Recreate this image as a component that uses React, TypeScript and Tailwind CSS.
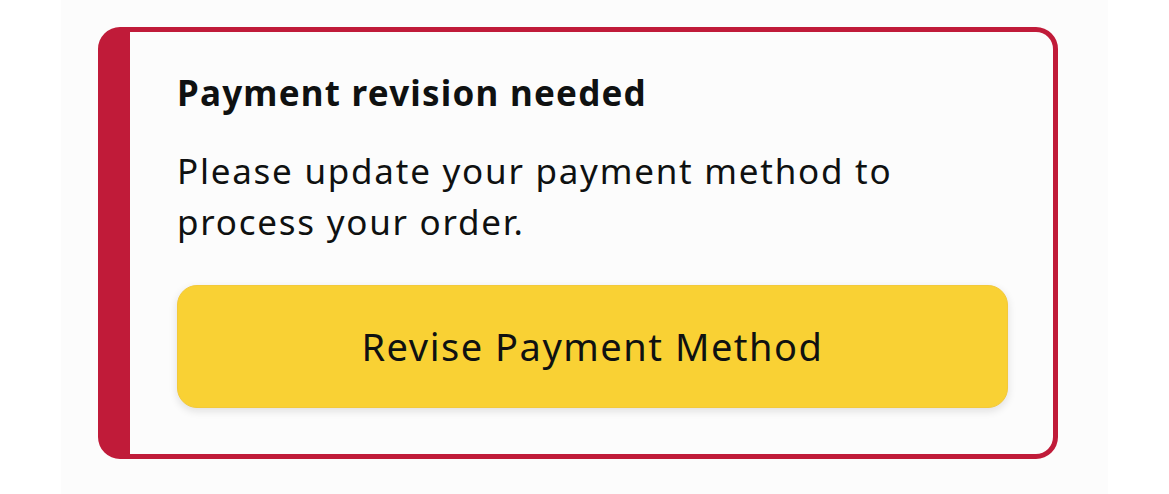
const App = () => {
  return (
    <div className="flex w-[1169px] h-[494px] bg-white font-['Noto_Sans',sans-serif] text-[#0f1111]">
      <div className="w-[61px] shrink-0 bg-white" />
      <div className="w-[1047px] shrink-0 bg-[#fcfcfc] pl-[37px] pt-[27px]">
        <div className="w-[960px] h-[432px] rounded-[22px] border-[5px] border-l-[32px] border-[#c01b39] bg-[#fcfcfc] pl-[47px] pr-[45px] pt-[39px]">
          <h2 className="text-[35px] leading-[44px] font-bold tracking-[0.035em]">
            Payment revision needed
          </h2>
          <p className="mt-[30px] text-[35px] leading-[51px] tracking-[0.05em]">
            Please update your payment method to
            <br />
            process your order.
          </p>
          <button className="mt-[38px] flex h-[123px] w-full items-center justify-center rounded-[20px] border border-[#f3c93a] bg-[#f9d134] text-[38px] tracking-[0.04em] shadow-[0_3px_8px_rgba(15,17,17,0.12)]">
            Revise Payment Method
          </button>
        </div>
      </div>
      <div className="flex-1 bg-white" />
    </div>
  );
};

export default App;
